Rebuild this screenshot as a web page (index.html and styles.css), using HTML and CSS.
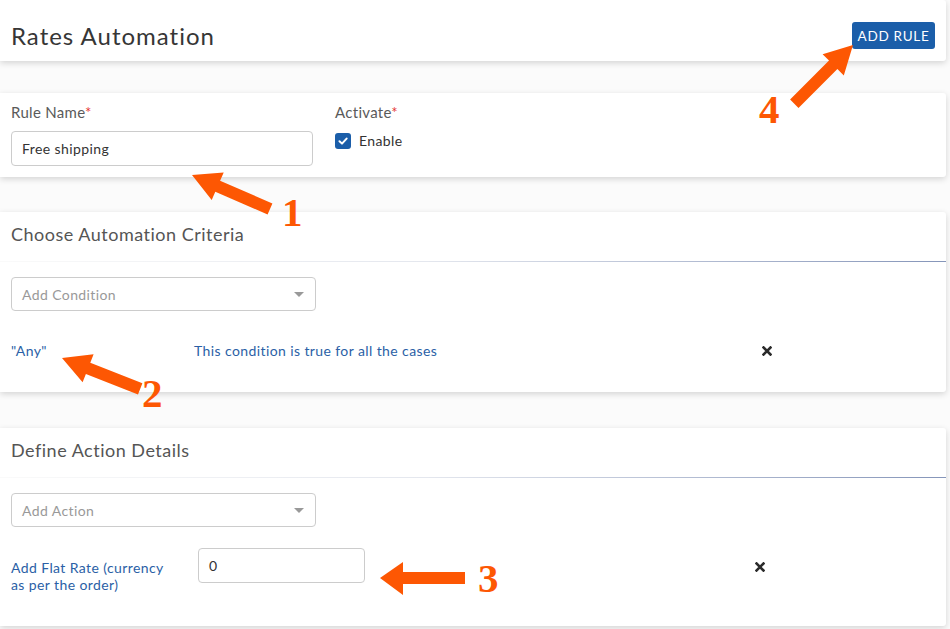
FILE: index.html
```html
<!DOCTYPE html>
<html>
<head>
<meta charset="utf-8">
<link rel="stylesheet" href="styles.css">
</head>
<body>
<div class="page">
  <header class="card header">
    <h1 class="title">Rates Automation</h1>
    <button class="btn-primary">ADD RULE</button>
  </header>

  <section class="card rule-card">
    <div class="field name-field">
      <label class="label">Rule Name<span class="req">*</span></label>
      <div class="input">Free shipping</div>
    </div>
    <div class="field">
      <label class="label">Activate<span class="req">*</span></label>
      <div class="check-row">
        <span class="checkbox">
          <svg width="10" height="10" viewBox="0 0 10 10"><path d="M1.5 5.2 L4 7.6 L8.6 2.6" fill="none" stroke="#fff" stroke-width="2" stroke-linecap="round" stroke-linejoin="round"/></svg>
        </span>
        <span class="check-label">Enable</span>
      </div>
    </div>
  </section>

  <section class="card section criteria">
    <h2 class="section-title">Choose Automation Criteria</h2>
    <div class="divider"></div>
    <div class="select"><span class="placeholder">Add Condition</span><span class="caret"></span></div>
    <div class="row row-criteria">
      <span class="link">"Any"</span>
      <span class="link">This condition is true for all the cases</span>
      <span class="remove"><svg width="10" height="10" viewBox="0 0 10 10"><path d="M1.5 1.5 L8.5 8.5 M8.5 1.5 L1.5 8.5" stroke="#2b2b2b" stroke-width="2.6" stroke-linecap="square"/></svg></span>
    </div>
  </section>

  <section class="card section action">
    <h2 class="section-title">Define Action Details</h2>
    <div class="divider"></div>
    <div class="select"><span class="placeholder">Add Action</span><span class="caret"></span></div>
    <div class="row row-action">
      <span class="link action-label">Add Flat Rate (currency as per the order)</span>
      <div class="input small-input">0</div>
      <span class="remove remove-action"><svg width="10" height="10" viewBox="0 0 10 10"><path d="M1.5 1.5 L8.5 8.5 M8.5 1.5 L1.5 8.5" stroke="#2b2b2b" stroke-width="2.6" stroke-linecap="square"/></svg></span>
    </div>
  </section>

  <svg class="annotations" width="950" height="629" viewBox="0 0 950 629">
    <g fill="#fd5703">
      <polygon points="192,175 223.7,172.4 220.1,180.7 272.4,203.5 267.6,214.5 215.3,191.7 211.7,200"/>
      <polygon points="62,358 93.6,354.3 90.3,362.7 142.4,383.3 138,394.5 85.9,373.9 82.6,382.3"/>
      <polygon points="380,578 403,562 403,572 465,572 465,584 403,584 403,595"/>
      <polygon points="853,45 843.8,75.4 837.4,69 798.5,107.9 790.1,99.5 829,60.6 822.6,54.2"/>
    </g>
    <g class="num" fill="#fd5703">
      <text x="282" y="226">1</text>
      <text x="142" y="407">2</text>
      <text x="478" y="592">3</text>
      <text x="759" y="123">4</text>
    </g>
  </svg>
</div>
</body>
</html>
```

FILE: styles.css
```css
* { box-sizing: border-box; }

body {
  margin: 0;
  background: #fbfbfb;
  font-family: Lato, "Open Sans", sans-serif;
}

.page {
  position: relative;
  width: 950px;
  height: 629px;
  overflow: hidden;
  display: flex;
  flex-direction: column;
}

.card {
  background: #fff;
  margin-right: 4px;
  border-radius: 0 3px 3px 0;
  box-shadow: 0 2px 6px rgba(0, 0, 0, 0.16);
}

/* header */
.header {
  height: 61px;
  padding: 10px 11px 0 11px;
  display: flex;
  align-items: center;
  justify-content: space-between;
  flex-shrink: 0;
}

.title {
  margin: 0;
  font-size: 24px;
  font-weight: 400;
  line-height: 29px;
  letter-spacing: 1px;
  color: #363636;
}

.btn-primary {
  width: 83px;
  height: 27px;
  padding: 0;
  border: none;
  border-radius: 3px;
  background: #1b5ea9;
  color: #fff;
  font-family: Lato, sans-serif;
  font-size: 13.5px;
  letter-spacing: 0.7px;
}

/* rule card */
.rule-card {
  margin-top: 32px;
  padding: 10px 11px 11px 11px;
  display: flex;
  gap: 22px;
  flex-shrink: 0;
}

.name-field { width: 302px; }

.label {
  display: block;
  font-size: 15px;
  line-height: 18px;
  letter-spacing: 0.3px;
  color: #5a5a5a;
}

.req { color: #e53935; }

.input {
  margin-top: 10px;
  height: 35px;
  border: 1px solid #ccc;
  border-radius: 4px;
  padding: 0 10px;
  display: flex;
  align-items: center;
  font-size: 14px;
  letter-spacing: 0.4px;
  color: #333;
}

.check-row {
  margin-top: 12px;
  display: flex;
  align-items: center;
  gap: 8px;
}

.checkbox {
  width: 16px;
  height: 16px;
  border-radius: 3px;
  background: #1b5ea9;
  display: flex;
  align-items: center;
  justify-content: center;
}

.check-label {
  font-size: 14px;
  letter-spacing: 0.4px;
  color: #333;
  line-height: 16px;
}

/* sections */
.section {
  padding: 12px 0 33px 0;
  flex-shrink: 0;
}

.criteria { margin-top: 35px; }
.action { margin-top: 36px; }

.section-title {
  margin: 0 0 17px 11px;
  font-size: 18px;
  font-weight: 400;
  line-height: 20px;
  letter-spacing: 0.5px;
  color: #555;
}

.divider {
  height: 1px;
  background: linear-gradient(to right, #fafafa, #e4e7ee 45%, #8595b9);
}

.select {
  margin: 15px 0 0 11px;
  width: 305px;
  height: 34px;
  border: 1px solid #ccc;
  border-radius: 4px;
  padding: 0 10px;
  display: flex;
  align-items: center;
  justify-content: space-between;
}

.placeholder {
  font-size: 14px;
  letter-spacing: 0.4px;
  color: #999;
}

.caret {
  width: 0;
  height: 0;
  border-left: 5px solid transparent;
  border-right: 5px solid transparent;
  border-top: 5px solid #999;
  margin-right: 1px;
}

.row {
  display: grid;
  padding-left: 11px;
}

.row-criteria {
  margin-top: 32px;
  grid-template-columns: 183px 568px 10px;
  align-items: center;
  line-height: 16px;
}

.row-action {
  margin-top: 21px;
  grid-template-columns: 187px 557px 10px;
  align-items: start;
}

.link {
  font-size: 14px;
  letter-spacing: 0.4px;
  color: #2b5fa6;
}

.action-label {
  margin-top: 11px;
  width: 165px;
  line-height: 17px;
}

.small-input {
  margin-top: 0;
  width: 167px;
}

.remove {
  display: flex;
  width: 10px;
  height: 10px;
}

.remove-action { margin-top: 14px; }

/* annotation overlay */
.annotations {
  position: absolute;
  left: 0;
  top: 0;
  pointer-events: none;
}

.num text {
  font-family: "Liberation Serif", "DejaVu Serif", serif;
  font-weight: 700;
  font-size: 41px;
}
```
